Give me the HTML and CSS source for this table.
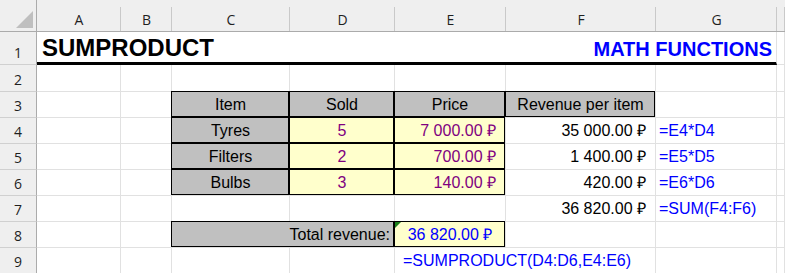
FILE: index.html
```html
<!DOCTYPE html>
<html lang="en">
<head>
<meta charset="utf-8">
<title>SUMPRODUCT</title>
<link rel="stylesheet" href="styles.css">
</head>
<body>
<div class="sheet">
  <!-- column headers -->
  <div class="corner"><span class="tri"></span></div>
  <div class="ch">A</div><div class="ch">B</div><div class="ch">C</div><div class="ch">D</div>
  <div class="ch">E</div><div class="ch">F</div><div class="ch">G</div><div class="ch"></div>

  <!-- row 1 -->
  <div class="rh">1</div>
  <div class="c title"><span class="t-main">SUMPRODUCT</span><span class="t-side">MATH FUNCTIONS</span></div>
  <div class="c"></div>

  <!-- row 2 -->
  <div class="rh">2</div>
  <div class="c"></div><div class="c"></div><div class="c"></div><div class="c"></div>
  <div class="c"></div><div class="c"></div><div class="c"></div><div class="c"></div>

  <!-- row 3 -->
  <div class="rh">3</div>
  <div class="c"></div><div class="c"></div>
  <div class="c box gray ctr">Item</div>
  <div class="c box gray ctr">Sold</div>
  <div class="c box gray ctr">Price</div>
  <div class="c box gray ctr">Revenue per item</div>
  <div class="c"></div><div class="c"></div>

  <!-- row 4 -->
  <div class="rh">4</div>
  <div class="c"></div><div class="c"></div>
  <div class="c box gray ctr">Tyres</div>
  <div class="c box yel ctr pur">5</div>
  <div class="c box yel num pur">7 000.00 ₽</div>
  <div class="c num">35 000.00 ₽</div>
  <div class="c blu">=E4*D4</div>
  <div class="c"></div>

  <!-- row 5 -->
  <div class="rh">5</div>
  <div class="c"></div><div class="c"></div>
  <div class="c box gray ctr">Filters</div>
  <div class="c box yel ctr pur">2</div>
  <div class="c box yel num pur">700.00 ₽</div>
  <div class="c num">1 400.00 ₽</div>
  <div class="c blu">=E5*D5</div>
  <div class="c"></div>

  <!-- row 6 -->
  <div class="rh">6</div>
  <div class="c"></div><div class="c"></div>
  <div class="c box gray ctr">Bulbs</div>
  <div class="c box yel ctr pur">3</div>
  <div class="c box yel num pur">140.00 ₽</div>
  <div class="c num">420.00 ₽</div>
  <div class="c blu">=E6*D6</div>
  <div class="c"></div>

  <!-- row 7 -->
  <div class="rh">7</div>
  <div class="c"></div><div class="c"></div><div class="c"></div><div class="c"></div><div class="c"></div>
  <div class="c num">36 820.00 ₽</div>
  <div class="c blu">=SUM(F4:F6)</div>
  <div class="c"></div>

  <!-- row 8 -->
  <div class="rh">8</div>
  <div class="c"></div><div class="c"></div>
  <div class="c box gray rt span2">Total revenue:</div>
  <div class="c box yel ctr blu flag">36 820.00 ₽</div>
  <div class="c"></div><div class="c"></div><div class="c"></div>

  <!-- row 9 -->
  <div class="rh">9</div>
  <div class="c"></div><div class="c"></div><div class="c"></div><div class="c"></div>
  <div class="c blu spill">=SUMPRODUCT(D4:D6,E4:E6)</div>
  <div class="c"></div><div class="c"></div><div class="c"></div>
</div>
</body>
</html>
```

FILE: styles.css
```css
html, body {
  margin: 0;
  padding: 0;
  background: #ffffff;
}

.sheet {
  display: grid;
  grid-template-columns: 37px 84px 51px 118px 105px 111px 150px 121px 1fr;
  grid-template-rows: 32px 33px 27px repeat(7, 26px);
  width: 785px;
  height: 273px;
  overflow: hidden;
  font-family: "Liberation Sans", Arial, sans-serif;
  font-size: 16px;
  color: #000;
}

/* header cells */
.corner {
  box-sizing: border-box;
  background: #efefef;
  border-right: 1px solid #ababab;
  border-bottom: 1px solid #ababab;
  display: flex;
  justify-content: flex-end;
  align-items: flex-end;
  padding: 0 3px 3px 0;
}
.tri {
  width: 0;
  height: 0;
  border-left: 17px solid transparent;
  border-bottom: 17px solid #bfbfbf;
}

.ch {
  box-sizing: border-box;
  background:
    linear-gradient(#c9c9c9, #c9c9c9) right bottom / 1px 24px no-repeat,
    #efefef;
  border-bottom: 1px solid #ababab;
  display: flex;
  justify-content: center;
  align-items: flex-end;
  padding-bottom: 2px;
  font-family: "Open Sans", "Noto Sans", sans-serif;
  font-size: 14px;
  line-height: 19px;
  color: #1f1f1f;
}

.rh {
  box-sizing: border-box;
  background: #efefef;
  border-right: 1px solid #ababab;
  border-bottom: 1px solid #d0d0d0;
  display: flex;
  justify-content: center;
  align-items: flex-end;
  padding-bottom: 2px;
  font-family: "Open Sans", "Noto Sans", sans-serif;
  font-size: 14px;
  line-height: 19px;
  color: #1f1f1f;
}

/* data cells */
.c {
  box-sizing: border-box;
  position: relative;
  border-right: 1px solid #e1e1e1;
  border-bottom: 1px solid #e1e1e1;
  display: flex;
  align-items: flex-end;
  padding: 0 3px 3px 3px;
  line-height: 18px;
  white-space: nowrap;
  min-width: 0;
}

.title {
  grid-column: span 7;
  justify-content: space-between;
  border-bottom: 3px solid #000;
  padding: 0 4px 1px 5px;
  font-weight: bold;
}
.t-main {
  font-size: 24px;
  line-height: 27px;
}
.t-side {
  font-size: 20px;
  line-height: 24px;
  color: #0000ff;
}

.span2 { grid-column: span 2; }

.box::after {
  content: "";
  position: absolute;
  left: -1px;
  top: -1px;
  right: 0;
  bottom: 0;
  border: 1px solid #000;
  pointer-events: none;
}

.gray { background: #c0c0c0; }
.yel { background: #ffffcc; }

.ctr { justify-content: center; }
.rt { justify-content: flex-end; padding-right: 4px; }
.num { justify-content: flex-end; padding-right: 9px; }

.pur { color: #800080; }
.blu { color: #0000ff; }

.flag::before {
  content: "";
  position: absolute;
  left: 0;
  top: 0;
  width: 0;
  height: 0;
  border-top: 6px solid #1a7f1a;
  border-right: 6px solid transparent;
}

.spill {
  overflow: visible;
  border-right-color: transparent;
  padding-left: 8px;
  z-index: 1;
}
```
